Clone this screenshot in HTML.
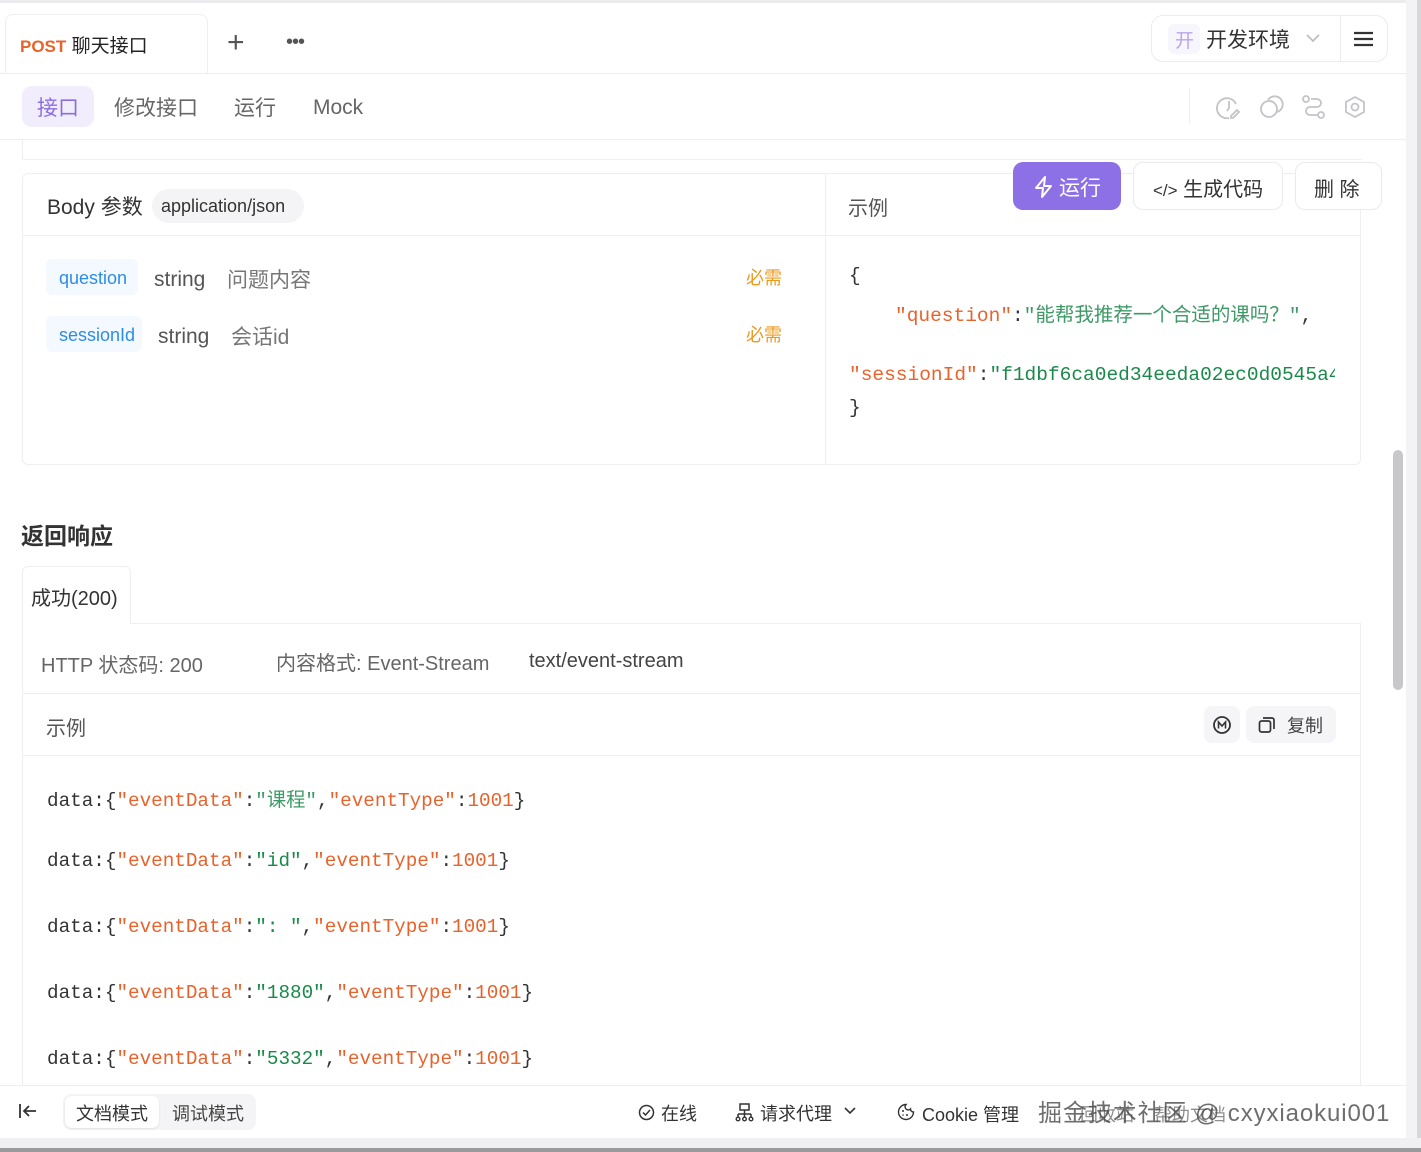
<!DOCTYPE html>
<html><head><meta charset="utf-8"><style>
*{box-sizing:border-box;margin:0;padding:0}
body{width:1421px;height:1152px;overflow:hidden;background:#fff;font-family:"Liberation Sans","Noto Sans CJK SC",sans-serif;color:#333;position:relative}
.a{position:absolute;white-space:nowrap}
.mono{font-family:"Liberation Mono","Noto Sans CJK SC",monospace}
.k{color:#e8622c}.s{color:#1a8a4a}.cs{color:#3d9a66}.n{color:#e8622c}
.ic{stroke:#c4c4c8;fill:none;stroke-width:1.8}
</style></head><body>
<div class="a" style="left:0;top:0;width:1421px;height:3px;background:#ececee"></div>
<div class="a" style="left:1406px;top:0;width:15px;height:1152px;background:#f3f3f5"></div>
<div class="a" style="left:1417px;top:0;width:4px;height:1152px;background:#d8d8da"></div>
<div class="a" style="left:5px;top:14px;width:203px;height:60px;border:1px solid #efeff1;border-bottom:none;border-radius:8px 8px 0 0;background:#fff"></div>
<div class="a" style="left:0;top:73px;width:1406px;height:1px;background:#eeeef0"></div>
<div class="a" style="left:20px;top:31px;font-size:19px"><b style="color:#e8622c;font-size:17px">POST</b> <span style="color:#222">聊天接口</span></div>
<div class="a" style="left:227px;top:26px;font-size:30px;color:#555;font-weight:300">+</div>
<div class="a" style="left:286px;top:31px;font-size:20px;color:#555;letter-spacing:-1px">•••</div>
<div class="a" style="left:1151px;top:15px;width:237px;height:47px;border:1px solid #ececee;border-radius:12px"></div>
<div class="a" style="left:1340px;top:15px;width:1px;height:47px;background:#ececee"></div>
<div class="a" style="left:1168px;top:24px;width:32px;height:30px;background:#f7f6fc;border-radius:6px"></div>
<div class="a" style="left:1175px;top:26px;font-size:19px;color:#b9a6e8">开</div>
<div class="a" style="left:1206px;top:24px;font-size:21px;color:#333">开发环境</div>
<svg class="a" style="left:1305px;top:32px" width="16" height="12"><path d="M2 3l6 6 6-6" stroke="#bbb" stroke-width="1.6" fill="none"/></svg>
<svg class="a" style="left:1353px;top:30px" width="22" height="18"><path d="M1 3h19M1 9h19M1 15h19" stroke="#333" stroke-width="2.2"/></svg>
<div class="a" style="left:22px;top:86px;width:72px;height:41px;background:#f1edfc;border-radius:10px"></div>
<div class="a" style="left:37px;top:92px;font-size:21px;color:#8a6ee0">接口</div>
<div class="a" style="left:114px;top:92px;font-size:21px;color:#666">修改接口</div>
<div class="a" style="left:234px;top:92px;font-size:21px;color:#666">运行</div>
<div class="a" style="left:313px;top:96px;font-size:21px;color:#666">Mock</div>
<div class="a" style="left:1189px;top:88px;width:1px;height:36px;background:#eee"></div>
<svg class="a" style="left:1216px;top:95px" width="26" height="26"><path class="ic" d="M20 9a10 10 0 1 0-7 14M13 6v7l-2 3M21 15l-6 6v2h2l6-6z"/></svg>
<svg class="a" style="left:1258px;top:95px" width="26" height="26"><circle class="ic" cx="11" cy="14" r="8"/><path class="ic" d="M10 5a8 8 0 1 1 9 12"/></svg>
<svg class="a" style="left:1301px;top:95px" width="26" height="26"><circle class="ic" cx="5" cy="4" r="3"/><circle class="ic" cx="20" cy="20" r="3"/><path class="ic" d="M10 4h6a4 4 0 0 1 0 8H9a4 4 0 0 0 0 8h7"/></svg>
<svg class="a" style="left:1343px;top:95px" width="26" height="26"><path class="ic" d="M12 2l9 5v10l-9 5-9-5V7z"/><circle class="ic" cx="12" cy="12" r="3.5"/></svg>
<div class="a" style="left:0;top:139px;width:1406px;height:1px;background:#eeeef0"></div>
<div class="a" style="left:22px;top:140px;width:1px;height:20px;background:#eee"></div>
<div class="a" style="left:22px;top:159px;width:1340px;height:1px;background:#f2f2f4"></div>
<div class="a" style="left:22px;top:173px;width:1339px;height:292px;border:1px solid #efeff1;border-radius:6px"></div>
<div class="a" style="left:825px;top:174px;width:1px;height:290px;background:#efeff1"></div>
<div class="a" style="left:23px;top:235px;width:1337px;height:1px;background:#efeff1"></div>
<div class="a" style="left:47px;top:191px;font-size:21px;color:#333">Body 参数</div>
<div class="a" style="left:152px;top:189px;width:152px;height:34px;background:#f4f4f6;border-radius:17px"></div>
<div class="a" style="left:161px;top:196px;font-size:18px;color:#333">application/json</div>
<div class="a" style="left:848px;top:192px;font-size:20px;color:#555">示例</div>
<div class="a" style="left:1013px;top:162px;width:108px;height:48px;background:#8d70e6;border-radius:10px"></div>
<svg class="a" style="left:1033px;top:175px" width="22" height="24"><path d="M12 2L3 13h7l-1 9 9-11h-7z" stroke="#fff" stroke-width="2" fill="none" stroke-linejoin="round"/></svg>
<div class="a" style="left:1059px;top:172px;font-size:21px;color:#fff">运行</div>
<div class="a" style="left:1133px;top:162px;width:150px;height:48px;border:1px solid #eaeaec;border-radius:10px;background:#fff"></div>
<div class="a" style="left:1153px;top:173px;font-size:20px;color:#333"><span style="font-size:17px">&lt;/&gt;</span> 生成代码</div>
<div class="a" style="left:1295px;top:162px;width:87px;height:48px;border:1px solid #eaeaec;border-radius:10px;background:#fff"></div>
<div class="a" style="left:1314px;top:173px;font-size:20px;color:#333">删 除</div>
<div class="a" style="left:46px;top:259px;width:92px;height:36px;background:#f4f9ff;border-radius:6px"></div>
<div class="a" style="left:59px;top:268px;font-size:18px;color:#2d8ce6">question</div>
<div class="a" style="left:154px;top:268px;font-size:21px;color:#555">string</div>
<div class="a" style="left:227px;top:264px;font-size:21px;color:#777">问题内容</div>
<div class="a" style="left:746px;top:264px;font-size:18px;color:#eb9a1f">必需</div>
<div class="a" style="left:46px;top:316px;width:96px;height:36px;background:#f4f9ff;border-radius:6px"></div>
<div class="a" style="left:59px;top:325px;font-size:18px;color:#2d8ce6">sessionId</div>
<div class="a" style="left:158px;top:325px;font-size:21px;color:#555">string</div>
<div class="a" style="left:231px;top:321px;font-size:21px;color:#777">会话id</div>
<div class="a" style="left:746px;top:321px;font-size:18px;color:#eb9a1f">必需</div>
<div class="a mono" style="left:849px;top:265px;font-size:19.5px;color:#333">{</div>
<div class="a mono" style="left:895px;top:298px;font-size:19.5px;color:#333"><span class="k">"question"</span>:<span class="cs">"能帮我推荐一个合适的课吗？"</span>,</div>
<div class="a mono" style="left:849px;top:364px;font-size:19.5px;color:#333;width:486px;overflow:hidden"><span class="k">"sessionId"</span>:<span class="s">"f1dbf6ca0ed34eeda02ec0d0545a4</span></div>
<div class="a mono" style="left:849px;top:397px;font-size:19.5px;color:#333">}</div>
<div class="a" style="left:1393px;top:450px;width:10px;height:240px;background:#c8c8ca;border-radius:5px"></div>
<div class="a" style="left:21px;top:517px;font-size:23px;font-weight:bold;color:#333">返回响应</div>
<div class="a" style="left:22px;top:566px;width:109px;height:58px;border:1px solid #efeff1;border-bottom:none;border-radius:6px 6px 0 0"></div>
<div class="a" style="left:31px;top:582px;font-size:20px;color:#333">成功(200)</div>
<div class="a" style="left:130px;top:623px;width:1231px;height:1px;background:#efeff1"></div>
<div class="a" style="left:22px;top:623px;width:1px;height:470px;background:#efeff1"></div>
<div class="a" style="left:1360px;top:623px;width:1px;height:470px;background:#efeff1"></div>
<div class="a" style="left:41px;top:649px;font-size:20px;color:#666">HTTP 状态码: 200</div>
<div class="a" style="left:276px;top:647px;font-size:20px;color:#666">内容格式: Event-Stream</div>
<div class="a" style="left:529px;top:650px;font-size:20px;color:#444">text/event-stream</div>
<div class="a" style="left:23px;top:693px;width:1337px;height:1px;background:#efeff1"></div>
<div class="a" style="left:46px;top:712px;font-size:20px;color:#555">示例</div>
<div class="a" style="left:1204px;top:706px;width:36px;height:37px;background:#f5f5f7;border-radius:8px"></div>
<svg class="a" style="left:1212px;top:715px" width="20" height="20"><circle cx="10" cy="10" r="8" stroke="#333" stroke-width="1.8" fill="none"/><path d="M6.5 13.5V7l3.5 4 3.5-4v6.5" stroke="#333" stroke-width="1.6" fill="none"/></svg>
<div class="a" style="left:1246px;top:706px;width:90px;height:37px;background:#f5f5f7;border-radius:8px"></div>
<svg class="a" style="left:1258px;top:716px" width="18" height="18"><rect x="1.5" y="5" width="11" height="11" rx="2" stroke="#333" stroke-width="1.7" fill="none"/><path d="M5 2h9a2 2 0 0 1 2 2v9" stroke="#333" stroke-width="1.7" fill="none"/></svg>
<div class="a" style="left:1287px;top:712px;font-size:18px;color:#444">复制</div>
<div class="a" style="left:23px;top:755px;width:1337px;height:1px;background:#efeff1"></div>
<div class="a mono" style="left:47px;top:784px;font-size:19.3px;color:#333">data:{<span class="k">"eventData"</span>:<span class="cs">"课程"</span>,<span class="k">"eventType"</span>:<span class="n">1001</span>}</div>
<div class="a mono" style="left:47px;top:850px;font-size:19.3px;color:#333">data:{<span class="k">"eventData"</span>:<span class="s">"id"</span>,<span class="k">"eventType"</span>:<span class="n">1001</span>}</div>
<div class="a mono" style="left:47px;top:916px;font-size:19.3px;color:#333">data:{<span class="k">"eventData"</span>:<span class="s">": "</span>,<span class="k">"eventType"</span>:<span class="n">1001</span>}</div>
<div class="a mono" style="left:47px;top:982px;font-size:19.3px;color:#333">data:{<span class="k">"eventData"</span>:<span class="s">"1880"</span>,<span class="k">"eventType"</span>:<span class="n">1001</span>}</div>
<div class="a mono" style="left:47px;top:1048px;font-size:19.3px;color:#333">data:{<span class="k">"eventData"</span>:<span class="s">"5332"</span>,<span class="k">"eventType"</span>:<span class="n">1001</span>}</div>
<div class="a" style="left:0;top:1085px;width:1406px;height:53px;background:#fff;border-top:1px solid #efeff1"></div>
<div class="a" style="left:0;top:1138px;width:1421px;height:14px;background:#f0f0f2"></div>
<div class="a" style="left:0;top:1148px;width:1421px;height:4px;background:#9a9a9c"></div>
<svg class="a" style="left:18px;top:1102px" width="20" height="18"><path d="M2 2v14M18 9H6M11 4L6 9l5 5" stroke="#333" stroke-width="1.8" fill="none"/></svg>
<div class="a" style="left:63px;top:1094px;width:193px;height:36px;background:#f4f4f6;border-radius:8px"></div>
<div class="a" style="left:65px;top:1096px;width:94px;height:32px;background:#fff;border-radius:7px;box-shadow:0 1px 2px rgba(0,0,0,.08)"></div>
<div class="a" style="left:76px;top:1100px;font-size:18px;color:#333">文档模式</div>
<div class="a" style="left:172px;top:1100px;font-size:18px;color:#444">调试模式</div>
<svg class="a" style="left:638px;top:1104px" width="17" height="17"><circle cx="8.5" cy="8.5" r="7" stroke="#333" stroke-width="1.5" fill="none"/><path d="M5 8.5l2.5 2.5 4.5-5" stroke="#333" stroke-width="1.5" fill="none"/></svg>
<div class="a" style="left:661px;top:1100px;font-size:18px;color:#333">在线</div>
<svg class="a" style="left:735px;top:1103px" width="19" height="19"><rect x="5" y="1" width="9" height="6" stroke="#333" stroke-width="1.5" fill="none"/><path d="M9.5 7v4M3 11h13M3 11v3M9.5 11v3M16 11v3" stroke="#333" stroke-width="1.5"/><circle cx="3" cy="16" r="1.8" stroke="#333" fill="none" stroke-width="1.4"/><circle cx="9.5" cy="16" r="1.8" stroke="#333" fill="none" stroke-width="1.4"/><circle cx="16" cy="16" r="1.8" stroke="#333" fill="none" stroke-width="1.4"/></svg>
<div class="a" style="left:760px;top:1100px;font-size:18px;color:#333">请求代理</div>
<svg class="a" style="left:843px;top:1106px" width="14" height="10"><path d="M2 2l5 5 5-5" stroke="#333" stroke-width="1.6" fill="none"/></svg>
<svg class="a" style="left:897px;top:1103px" width="18" height="18"><path d="M9 1.5a7.5 7.5 0 1 0 7.5 7.5 3 3 0 0 1-3-3 3 3 0 0 1-4.5-4.5z" stroke="#333" stroke-width="1.4" fill="none"/><circle cx="6" cy="8" r="1" fill="#333"/><circle cx="10" cy="12" r="1" fill="#333"/><circle cx="6" cy="12" r=".8" fill="#333"/></svg>
<div class="a" style="left:922px;top:1101px;font-size:18px;color:#333">Cookie 管理</div>
<div class="a" style="left:1038px;top:1093px;font-size:24px;color:#555;opacity:.85;letter-spacing:0.9px">掘金技术社区 @ cxyxiaokui001</div>
<div class="a" style="left:1080px;top:1101px;font-size:18px;color:#444;opacity:.6">回收站 &nbsp;&nbsp; 帮助文档</div>
</body></html>
